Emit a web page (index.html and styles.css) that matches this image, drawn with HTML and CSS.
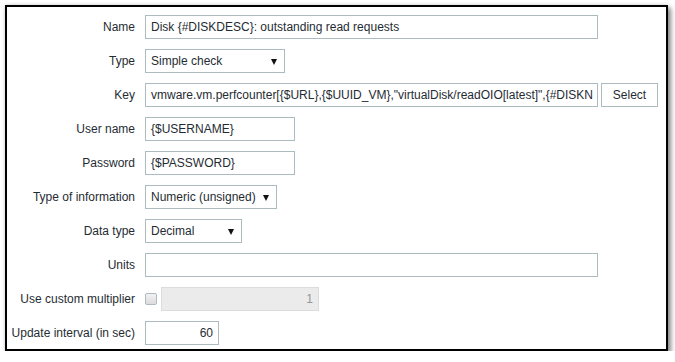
FILE: index.html
```html
<!DOCTYPE html>
<html>
<head>
<meta charset="utf-8">
<link rel="stylesheet" href="styles.css">
</head>
<body>
<div class="frame">
  <div class="form">
    <label class="lbl">Name</label>
    <div class="ctl"><div class="input w-wide">Disk {#DISKDESC}: outstanding read requests</div></div>

    <label class="lbl">Type</label>
    <div class="ctl"><div class="select w-type">Simple check<span class="arrow"></span></div></div>

    <label class="lbl">Key</label>
    <div class="ctl"><div class="input w-wide key">vmware.vm.perfcounter[{$URL},{$UUID_VM},"virtualDisk/readOIO[latest]",{#DISKN</div><div class="btn">Select</div></div>

    <label class="lbl">User name</label>
    <div class="ctl"><div class="input w-user">{$USERNAME}</div></div>

    <label class="lbl">Password</label>
    <div class="ctl"><div class="input w-user">{$PASSWORD}</div></div>

    <label class="lbl">Type of information</label>
    <div class="ctl"><div class="select w-info">Numeric (unsigned)<span class="arrow"></span></div></div>

    <label class="lbl">Data type</label>
    <div class="ctl"><div class="select w-dtype">Decimal<span class="arrow"></span></div></div>

    <label class="lbl">Units</label>
    <div class="ctl"><div class="input w-wide"></div></div>

    <label class="lbl">Use custom multiplier</label>
    <div class="ctl"><span class="check"></span><div class="input w-mult disabled num">1</div></div>

    <label class="lbl">Update interval (in sec)</label>
    <div class="ctl"><div class="input w-int num">60</div></div>
  </div>
</div>
</body>
</html>
```
FILE: styles.css
```css
html, body {
  margin: 0;
  padding: 0;
  background: #ffffff;
}
body {
  font-family: Arial, "Liberation Sans", sans-serif;
  font-size: 12px;
  color: #1f2c33;
}
.frame {
  margin: 5px 0 0 5px;
  width: 659px;
  height: 342px;
  border: 2px solid #000;
  background: #fff;
  box-shadow: 3px 3px 5px rgba(0, 0, 0, 0.45), 0 0 4px rgba(0, 0, 0, 0.15);
  box-sizing: content-box;
}
.form {
  display: grid;
  grid-template-columns: 128px 1fr;
  column-gap: 10px;
  row-gap: 10px;
  padding: 8px 0 0 0;
}
.lbl {
  text-align: right;
  line-height: 24px;
  height: 24px;
  white-space: nowrap;
}
.ctl {
  display: flex;
  align-items: center;
  height: 24px;
}
.input, .select, .btn {
  box-sizing: border-box;
  height: 24px;
  border: 1px solid #acbbc0;
  background: #fff;
  line-height: 22px;
  padding: 0 5px;
  white-space: nowrap;
  overflow: hidden;
}
.key { padding-right: 2px; }
.select {
  position: relative;
  padding-right: 20px;
}
.arrow {
  position: absolute;
  right: 7px;
  top: 9px;
  width: 0;
  height: 0;
  border-left: 3px solid transparent;
  border-right: 3px solid transparent;
  border-top: 6px solid #111;
}
.btn {
  margin-left: 3px;
  width: 57px;
  text-align: center;
  padding: 0;
}
.w-wide { width: 453px; }
.w-type { width: 140px; }
.w-user { width: 150px; }
.w-info { width: 132px; }
.w-dtype { width: 97px; }
.w-mult { width: 158px; }
.w-int { width: 74px; }
.num { text-align: right; }
.disabled {
  background: #ebebeb;
  color: #969696;
  border-color: #dcdcdc;
  margin-left: 4px;
}
.check {
  box-sizing: border-box;
  width: 12px;
  height: 12px;
  border: 1px solid #acbbc0;
  border-radius: 2px;
  background: linear-gradient(#f2f2f2, #dcdcdc);
}
```
